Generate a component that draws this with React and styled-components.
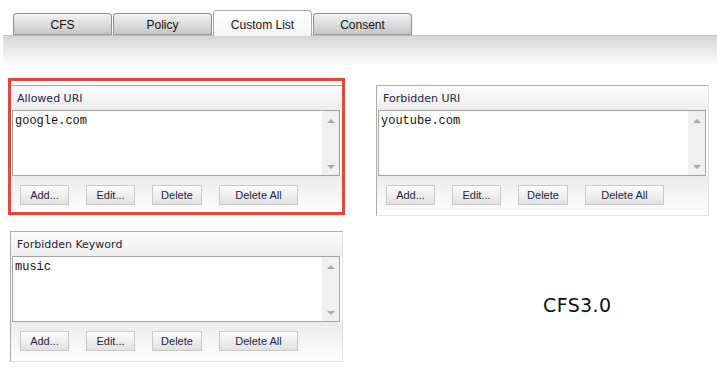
import React from "react";
import styled, { createGlobalStyle } from "styled-components";

const Global = createGlobalStyle`
  html, body { margin: 0; padding: 0; background: #fff; }
  body { font-family: "Liberation Sans", Arial, sans-serif; width: 717px; height: 370px; overflow: hidden; }
`;

const Header = styled.div`
  margin-left: 3px;
`;

const TabStrip = styled.div`
  display: flex;
  align-items: flex-end;
  height: 25px;
  padding: 10px 0 0 10px;
  border-bottom: 1px solid #b9c0cf;
`;

const Tab = styled.div`
  box-sizing: border-box;
  width: 99px;
  margin-right: 1px;
  height: ${(p) => (p.$active ? "26px" : "22px")};
  margin-bottom: ${(p) => (p.$active ? "-1px" : "0")};
  padding-top: ${(p) => (p.$active ? "7px" : "4px")};
  border: 1px solid ${(p) => (p.$active ? "#a9a9a9" : "#8f8f8f")};
  border-bottom: ${(p) => (p.$active ? "none" : "1px solid #9a9a9a")};
  border-radius: 4px 4px 0 0;
  background: ${(p) =>
    p.$active
      ? "linear-gradient(to bottom, #ffffff, #f4f4f4)"
      : "linear-gradient(to bottom, #f3f3f3, #c6c6c6)"};
  text-align: center;
  font-size: 12px;
  line-height: 14px;
  color: #141414;
`;

const Band = styled.div`
  height: 30px;
  background: linear-gradient(to bottom, #d6d6d6, #ffffff);
`;

const Grid = styled.div`
  display: grid;
  grid-template-columns: 333px 333px;
  column-gap: 33px;
  row-gap: 15px;
  margin: 19px 0 0 10px;
  align-items: start;
`;

const Panel = styled.div`
  position: relative;
  box-sizing: border-box;
  border-top: 1px solid #acacac;
  border-left: 1px solid #acacac;
  border-right: 1px solid #e2e2e2;
  border-bottom: 1px solid #e6e6e6;
  ${(p) =>
    p.$highlight &&
    `
    &::after {
      content: "";
      position: absolute;
      top: -8px;
      left: -3px;
      right: -3px;
      bottom: 0px;
      border: 3px solid #e8453e;
      pointer-events: none;
    }
  `}
`;

const PanelTitle = styled.div`
  height: 24px;
  box-sizing: border-box;
  padding: 6px 0 0 6px;
  font-family: "DejaVu Sans", Verdana, sans-serif;
  font-size: 11px;
  line-height: 14px;
  color: #25253a;
  background: linear-gradient(to bottom, #fbfbfb, #eeeeee);
`;

const ListBox = styled.div`
  display: flex;
  height: 66px;
  box-sizing: border-box;
  margin: 0 2px 0 1px;
  border: 1px solid #a3a3a3;
  background: #fff;
`;

const ListText = styled.div`
  flex: 1;
  padding: 3px 0 0 2px;
  font-family: "Liberation Mono", "Courier New", monospace;
  font-size: 12px;
  line-height: 14px;
  color: #111;
`;

const ScrollBar = styled.div`
  width: 17px;
  background: #f0f0f0;
  display: flex;
  flex-direction: column;
  justify-content: space-between;
  align-items: center;
  padding: 8px 0 6px;
  box-sizing: border-box;
`;

const Arrow = styled.div`
  width: 0;
  height: 0;
  border-left: 4px solid transparent;
  border-right: 4px solid transparent;
  ${(p) =>
    p.$down
      ? "border-top: 4px solid #a8a8a8;"
      : "border-bottom: 4px solid #a8a8a8;"}
`;

const Footer = styled.div`
  display: flex;
  gap: 17px;
  padding: 9px 0 10px 9px;
  background: linear-gradient(to bottom, #ebebeb, #ffffff);
`;

const Button = styled.div`
  box-sizing: border-box;
  width: ${(p) => p.$w}px;
  height: 20px;
  border: 1px solid #c9c9c9;
  background: linear-gradient(to bottom, #fdfdfd, #e1e1e1);
  font-family: "Liberation Sans", Arial, sans-serif;
  font-size: 11px;
  line-height: 18px;
  text-align: center;
  color: #1f1f45;
`;

const Version = styled.div`
  padding: 63px 0 0 167px;
  font-family: "DejaVu Sans", Verdana, sans-serif;
  font-size: 19px;
  line-height: 22px;
  letter-spacing: 0.4px;
  color: #111;
`;

const ListPanel = ({ title, item, highlight }) => (
  <Panel $highlight={highlight}>
    <PanelTitle>{title}</PanelTitle>
    <ListBox>
      <ListText>{item}</ListText>
      <ScrollBar>
        <Arrow />
        <Arrow $down />
      </ScrollBar>
    </ListBox>
    <Footer>
      <Button $w={49}>Add...</Button>
      <Button $w={49}>Edit...</Button>
      <Button $w={50}>Delete</Button>
      <Button $w={79}>Delete All</Button>
    </Footer>
  </Panel>
);

export default function App() {
  return (
    <>
      <Global />
      <Header>
        <TabStrip>
          <Tab>CFS</Tab>
          <Tab>Policy</Tab>
          <Tab $active>Custom List</Tab>
          <Tab>Consent</Tab>
        </TabStrip>
        <Band />
      </Header>
      <Grid>
        <ListPanel title="Allowed URI" item="google.com" highlight />
        <ListPanel title="Forbidden URI" item="youtube.com" />
        <ListPanel title="Forbidden Keyword" item="music" />
        <Version>CFS3.0</Version>
      </Grid>
    </>
  );
}
